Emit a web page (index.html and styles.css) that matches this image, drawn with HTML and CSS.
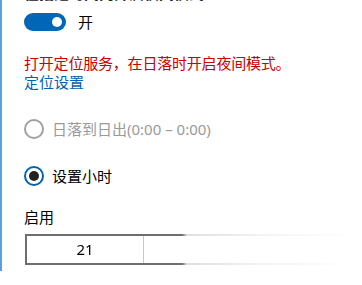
FILE: index.html
```html
<!DOCTYPE html>
<html lang="zh-CN">
<head>
<meta charset="utf-8">
<link rel="stylesheet" href="styles.css">
</head>
<body>
<div class="page">
  <div class="title">在指定时间内开启夜间模式</div>
  <div class="toggle-row">
    <span class="toggle"><span class="knob"></span></span>
    <span class="toggle-label">开</span>
  </div>
  <div class="warn">打开定位服务，在日落时开启夜间模式。</div>
  <div class="link">定位设置</div>
  <div class="radio-row disabled">
    <span class="radio"></span>
    <span class="radio-label">日落到日出(0:00 – 0:00)</span>
  </div>
  <div class="radio-row second">
    <span class="radio checked"><span class="dot"></span></span>
    <span class="radio-label">设置小时</span>
  </div>
  <div class="field-label">启用</div>
  <div class="picker">
    <div class="cell hour">21</div>
    <div class="cell minute"></div>
  </div>
</div>
</body>
</html>
```
FILE: styles.css
```css
html, body {
  margin: 0;
  padding: 0;
  background: #ffffff;
  overflow: hidden;
}
body {
  width: 362px;
  height: 285px;
  font-family: "Noto Sans", "Noto Sans CJK SC", sans-serif;
  font-size: 15px;
  color: #000;
}
.page {
  height: 285px;
  border-left: 2px solid #5b9fdd;
  padding-left: 22px;
  box-sizing: border-box;
}
.title {
  margin-top: -14px;
  height: 15px;
  line-height: 15px;
  font-weight: 600;
  color: #222;
  white-space: nowrap;
}
.toggle-row {
  margin-top: 12px;
  height: 18px;
  display: flex;
  align-items: center;
}
.toggle {
  position: relative;
  width: 42px;
  height: 18px;
  border-radius: 9px;
  background: #0067b8;
  box-sizing: border-box;
}
.knob {
  position: absolute;
  right: 4px;
  top: 4px;
  width: 10px;
  height: 10px;
  border-radius: 50%;
  background: #fff;
}
.toggle-label {
  margin-left: 12px;
  line-height: 18px;
}
.warn {
  margin-top: 23px;
  line-height: 19px;
  color: #c80000;
  white-space: nowrap;
  letter-spacing: -0.2px;
}
.link {
  line-height: 19px;
  color: #0063b1;
}
.radio-row {
  display: flex;
  align-items: center;
  height: 20px;
  margin-top: 27px;
}
.radio {
  width: 20px;
  height: 20px;
  box-sizing: border-box;
  border: 2px solid #a0a0a0;
  border-radius: 50%;
  display: flex;
  align-items: center;
  justify-content: center;
}
.radio.checked {
  border-color: #0063b1;
}
.dot {
  width: 10px;
  height: 10px;
  border-radius: 50%;
  background: #222;
}
.radio-label {
  margin-left: 8px;
  line-height: 20px;
  white-space: nowrap;
}
.disabled .radio-label {
  color: #9a9a9a;
}
.field-label {
  margin-top: 22px;
  line-height: 19px;
}
.picker {
  margin-top: 7px;
  margin-left: 1px;
  width: 330px;
  height: 31px;
  box-sizing: border-box;
  border: 2px solid #6e6e6e;
  display: flex;
  -webkit-mask-image: linear-gradient(to right, #000 157px, rgba(0,0,0,0.22) 162px, rgba(0,0,0,0.08) 240px, transparent 330px);
  mask-image: linear-gradient(to right, #000 157px, rgba(0,0,0,0.22) 162px, rgba(0,0,0,0.08) 240px, transparent 330px);
}
.cell {
  display: flex;
  align-items: center;
  justify-content: center;
  line-height: 27px;
  font-size: 15px;
}
.hour {
  width: 116px;
  border-right: 1px solid #c8c8c8;
}
.minute {
  flex: 1;
}
```
